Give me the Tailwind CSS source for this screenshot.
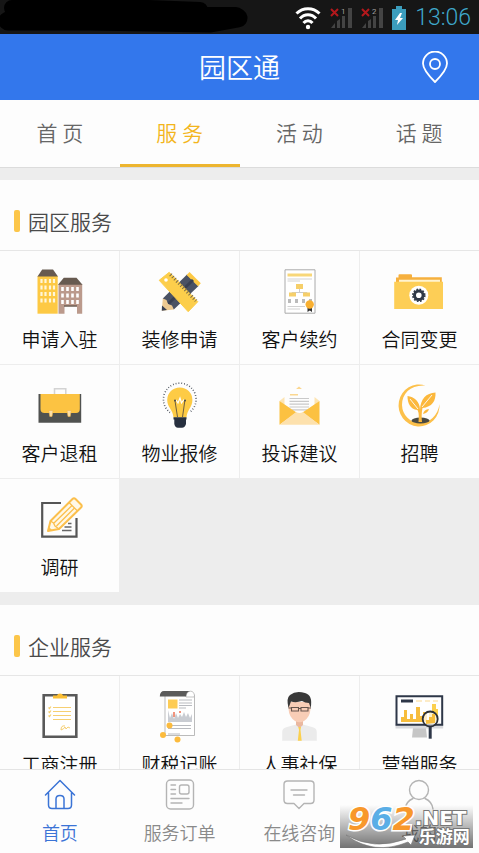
<!DOCTYPE html>
<html lang="zh-CN">

<head>
    <meta charset="UTF-8" />
    <meta name="viewport" content="width=device-width, initial-scale=1.0" />
    <title>园区通</title>
    <script src="https://cdn.jsdelivr.net/npm/@tailwindcss/browser@4"></script>
</head>

<body class="bg-[#ededed] font-['Noto_Sans_CJK_SC',sans-serif] font-[350]">
    <div class="relative flex h-screen flex-col overflow-hidden">

        <!-- Status bar -->
        <div class="flex h-[34px] shrink-0 items-center bg-[#161616] pr-2">
            <svg class="h-[34px] w-[250px]" viewBox="0 0 250 34" fill="none" stroke="#000" stroke-linecap="round">
                <path d="M12 8H148L200 10" stroke-width="16" />
                <path d="M8 21H90L210 23L238 18" stroke-width="19" />
                <path d="M100 16H236" stroke-width="18" />
            </svg>
            <div class="ml-auto flex items-center gap-[9px] pt-[2px]">
                <svg class="h-6 w-[26px]" viewBox="0 0 26 24" fill="none" stroke="#fff" stroke-width="3">
                    <path d="M1.500 7.500C8 1 18 1 24.500 7.500M5 12.500C9.500 7.500 16.500 7.500 21 12.500M8.500 17C11 14 15 14 17.500 17" />
                    <circle cx="13" cy="21" r="2.200" fill="#fff" stroke="none" />
                </svg>
                <svg class="h-6 w-[22px]" viewBox="0 0 22 24">
                    <path d="M1 22L5 17V22ZM7 15L10 13V22H7ZM12 10H15V22H12ZM18 2H22V22H18Z" fill="#444" />
                    <path d="M1 3L8 10M8 3L1 10" stroke="#b3181c" stroke-width="2" />
                    <text x="11" y="8" fill="#ddd" font-size="8" font-family="Roboto">1</text>
                </svg>
                <svg class="h-6 w-[22px]" viewBox="0 0 22 24">
                    <path d="M1 22L5 17V22ZM7 15L10 13V22H7ZM12 10H15V22H12ZM18 2H22V22H18Z" fill="#444" />
                    <path d="M1 3L8 10M8 3L1 10" stroke="#b3181c" stroke-width="2" />
                    <text x="11" y="8" fill="#ddd" font-size="8" font-family="Roboto">2</text>
                </svg>
                <svg class="h-6 w-[14px]" viewBox="0 0 14 24">
                    <path d="M4 0H10V3H14V24H0V3H4Z" fill="#3b9dbd" />
                    <path d="M8 7L3 14H6L5 19L11 12H8L10 7Z" fill="#fff" />
                </svg>
                <span class="font-['Roboto',sans-serif] text-[23px] leading-6 font-light text-[#3fa9cc]">13:06</span>
            </div>
        </div>

        <!-- Header -->
        <header class="relative flex h-[66px] shrink-0 items-center justify-center bg-[#3377ec] text-white">
            <h1 class="text-[27px] leading-9">园区通</h1>
            <button class="absolute right-7 top-[17px]" aria-label="位置">
                <svg class="h-8 w-8" viewBox="0 0 32 32" fill="none" stroke="#fff" stroke-width="1.800">
                    <path d="M16 31C13 28 4 19 4 12.500A12 12 0 0 1 28 12.500C28 19 19 28 16 31Z" stroke-linejoin="round" />
                    <circle cx="16" cy="13" r="5" />
                </svg>
            </button>
        </header>

        <!-- Tabs -->
        <nav class="grid h-[67px] shrink-0 grid-cols-4 bg-[#fdfdfd] text-center text-[21px] leading-16 text-[#666]">
            <a href="#">首 页</a>
            <a href="#" class="border-b-3 border-[#edb52f] text-[#f3b51c]">服 务</a>
            <a href="#">活 动</a>
            <a href="#">话 题</a>
        </nav>

        <main class="min-h-0 flex-1 overflow-y-auto [scrollbar-width:none]">
            <!-- Park services -->
            <section class="border-t border-[#dcdcdc] pt-3">
                <div class="flex h-[71px] items-center border-b border-[#e6e6e6] bg-[#fdfdfd] pt-3 pl-[14px]">
                    <span class="h-[22px] w-[6px] rounded-xs bg-[#fcc64a]"></span>
                    <h2 class="ml-2 text-[21px] leading-8 text-[#4a4a4a]">园区服务</h2>
                </div>
                <div class="grid grid-cols-4 gap-px text-[19px] leading-6 text-[#111]">
                    <a href="#" class="flex flex-col items-center gap-3 bg-[#fdfdfd] pt-4 pb-[13px]">
                        <svg class="size-12 overflow-visible" viewBox="0 0 48 48">
                            <path d="M1.500 9H21.700V46.700H1.500Z" fill="#fdc944" />
                            <path d="M1.500 9.500L6.200 2.500H17L22 9.500Z" fill="#675a50" />
                            <path d="M22.500 17H46.200V46.700H41V39H28.500V46.700H22.500Z" fill="#bb9a8c" />
                            <path d="M22 17.700L27.800 10.700H40.500L46.500 17.700Z" fill="#675a50" />
                            <path d="M5.500 12V36M9.500 12V36M14 12V36M18 12V36" stroke="#fff6d8" stroke-width="2.200" stroke-dasharray="4 2.500" />
                            <path d="M26.500 20V38M31.500 20V38M36.500 20V38M41.500 20V38" stroke="#fff" stroke-width="2.600" stroke-dasharray="4 2.500" />
                            <path d="M28 39H41" stroke="#6d5c52" stroke-width="1.500" />
                        </svg>
                        <span>申请入驻</span>
                    </a>
                    <a href="#" class="flex flex-col items-center gap-3 bg-[#fdfdfd] pt-4 pb-[13px]">
                        <svg class="size-12 overflow-visible" viewBox="0 0 48 48">
                            <path d="M31 7.500L42.500 19L17.800 42.500L6.800 31.500Z" fill="#4a5264" />
                            <path d="M33.500 5L44.800 16.300L42 19.300L30.600 8Z" fill="#fdc944" />
                            <path d="M37 13L12 37" stroke="#394052" stroke-width="3" />
                            <path d="M6.800 31.500L10.500 33L12 37L16 38.500L17.800 42.500L5.800 43.700Z" fill="#ecc992" />
                            <path d="M6 38.500L11 43L5.800 43.700Z" fill="#394052" />
                            <path d="M13.200 5.300L41.800 34.700L32.200 44.700L3.200 13.300Z" fill="#fcce4b" stroke="#fcce4b" stroke-linejoin="round" />
                            <path d="M14.500 7.500L40 33.700" stroke="#7c6d47" stroke-width="3.500" stroke-dasharray="1 2" />
                            <circle cx="10" cy="13" r="1.800" fill="#fff" />
                        </svg>
                        <span>装修申请</span>
                    </a>
                    <a href="#" class="flex flex-col items-center gap-3 bg-[#fdfdfd] pt-4 pb-[13px]">
                        <svg class="size-12 overflow-visible" viewBox="0 0 48 48">
                            <path d="M9 2.800H39V46.200H9Z" fill="#fff" stroke="#aaa" />
                            <path d="M11.500 8H36" stroke="#f8d778" stroke-width="3" />
                            <path d="M11.500 12H36M11.500 14H24M11.500 39.500H29M11.500 42H24" stroke="#d2d2d2" />
                            <path d="M23.500 22V25M16 28V25.500H31V28" fill="none" stroke="#ccc" />
                            <path d="M20 17H27V22H20ZM13 25.500H20V29.500H13ZM27 25.500H34V29.500H27Z" fill="#f6cf6a" />
                            <path d="M12 32H15V36H12ZM19 32H22V36H19ZM26 32H29V36H26ZM33 32H36V36H33Z" fill="#bbb" />
                            <path d="M31.500 40H36V45L33.800 43.500L31.500 45Z" fill="#333" />
                            <circle cx="33.700" cy="37.500" r="4.200" fill="#f9b031" />
                        </svg>
                        <span>客户续约</span>
                    </a>
                    <a href="#" class="flex flex-col items-center gap-3 bg-[#fdfdfd] pt-4 pb-[13px]">
                        <svg class="size-12 overflow-visible" viewBox="0 0 48 48">
                            <path d="M0 16V10.500H2.500V8Q2.500 7.300 3.500 7.300H15Q16 7.300 16 8.500V10.300H45.800V16Z" fill="#f6b03e" />
                            <path d="M3 12.800H44V16H3Z" fill="#fff3cf" />
                            <path d="M-1.800 14.700H47V42H-1.800Z" fill="#fdce56" />
                            <circle cx="22.800" cy="28.300" r="9.500" fill="#fff" />
                            <circle cx="22.800" cy="28.300" r="4.300" fill="none" stroke="#2f3947" stroke-width="3" />
                            <circle cx="22.800" cy="28.300" r="6" fill="none" stroke="#2f3947" stroke-width="1.600" stroke-dasharray="1.700 1.440" />
                        </svg>
                        <span>合同变更</span>
                    </a>
                    <a href="#" class="flex flex-col items-center gap-3 bg-[#fdfdfd] pt-4 pb-[13px]">
                        <svg class="size-12 overflow-visible" viewBox="0 0 48 48">
                            <path d="M18.500 13V7.800H29.800V13" fill="none" stroke="#d3d3d3" stroke-width="1.500" />
                            <path d="M2.500 13H45.200V41.700H2.500Z" fill="#505250" />
                            <path d="M4.500 13H43.800V28Q43.800 32 40 32H8.500Q4.500 32 4.500 28Z" fill="#fcc342" />
                            <path d="M12.800 29.500H17L16 35.500H13.800ZM31 29.500H35.200L34.200 35.500H32Z" fill="#fce0a8" stroke="#efb54e" stroke-width=".6" />
                        </svg>
                        <span>客户退租</span>
                    </a>
                    <a href="#" class="flex flex-col items-center gap-3 bg-[#fdfdfd] pt-4 pb-[13px]">
                        <svg class="size-12 overflow-visible" viewBox="0 0 48 48" fill="none">
                            <path d="M14 31.500A16.300 16.300 0 1 1 33.500 31.500" stroke="#444b55" stroke-width="1.600" stroke-dasharray=".8 2" />
                            <path d="M11.200 19A12.600 12.600 0 0 1 36.400 19C36.400 26 31 29 30.500 36.500H17.500C17 29 11.200 26 11.200 19Z" fill="#fdcb45" />
                            <path d="M19 20L21.500 36M28.800 20L26.500 36" stroke="#5b5140" stroke-width=".9" />
                            <path d="M20 19L22 22L24 17L25.500 22L28 18.500" stroke="#fff" stroke-width="1.200" />
                            <circle cx="19" cy="19.500" r="1" fill="#444" />
                            <circle cx="29" cy="19.500" r="1" fill="#444" />
                            <path d="M17.500 36.300H30.500V38.500H30V43Q29 46.700 26 46.700H22Q19 46.700 18.300 43V38.500H17.500Z" fill="#27303f" />
                        </svg>
                        <span>物业报修</span>
                    </a>
                    <a href="#" class="flex flex-col items-center gap-3 bg-[#fdfdfd] pt-4 pb-[13px]">
                        <svg class="size-12 overflow-visible" viewBox="0 0 48 48">
                            <path d="M3.500 20L8.500 16V24ZM43.500 20L38.500 16V24Z" fill="#fde5b4" />
                            <path d="M13.500 17.500H33M13.500 20.300H33M13.500 23.100H33M13.500 26H33M16 28.800H31" stroke="#c9c9c9" stroke-width="1.200" />
                            <path d="M3.500 20L20.500 31.500L3.500 43.700ZM43.500 20L26.500 31.500L43.500 43.700Z" fill="#fcc141" />
                            <path d="M3.500 43.700L20 31Q23.500 33 27 31L43.500 43.700Z" fill="#fde1ad" />
                            <path d="M20 8L23 5.500L26 8ZM14 13H22V14.500H14Z" fill="#fbd790" />
                        </svg>
                        <span>投诉建议</span>
                    </a>
                    <a href="#" class="flex flex-col items-center gap-3 bg-[#fdfdfd] pt-4 pb-[13px]">
                        <svg class="size-12 overflow-visible" viewBox="0 0 48 48">
                            <path d="M29.500 4.500A20.500 21 0 1 0 43.500 23C42 35 33 42 24 42A18 18.500 0 0 1 6 24C6 12 15 3.500 29.500 4.500Z" fill="#fcc04a" />
                            <ellipse cx="24.500" cy="39.500" rx="9" ry="3" fill="#4a4a42" />
                            <path d="M22.500 41C23 35 23 32 21.500 29C14 28 11.500 22 11.500 15C18 16 24 20 24 29C24.500 18 30 12 39.500 11.500C40 20 36 26 26.500 27C25.500 32 25.500 36 26 41Z" fill="#fcb83c" />
                            <path d="M14 18L22 28M26 26L36 14M27 33Q28 28.500 33 28Q32 32 27 33" fill="none" stroke="#fdfdfd" stroke-width=".9" />
                            <path d="M27 33Q28 28.500 33 28Q32 32 27 33" fill="#fcb83c" />
                        </svg>
                        <span>招聘</span>
                    </a>
                    <a href="#" class="flex flex-col items-center gap-3 bg-[#fdfdfd] pt-4 pb-[13px]">
                        <svg class="size-12 overflow-visible" viewBox="0 0 48 48" fill="none">
                            <path d="M25 8H6.200V41.700H40.500V23" stroke="#555" stroke-width="2.200" />
                            <path d="M32 28.500H35.500M28.500 32H35.500M26 35.500H35.500" stroke="#666" stroke-width="1.300" />
                            <path d="M12 36L14.500 26L36.500 4Q38 2.500 39.500 4L45 9.500Q46.500 11 45 12.500L23 34Z" fill="#fff8e6" stroke="#fbbf4c" stroke-width="2" stroke-linejoin="round" />
                            <path d="M14.500 26L17.500 28L19 31L23 34M33 7.500L41.500 16M18 28L36 10.500M20.500 31L38.500 13" stroke="#fbbf4c" stroke-width="1.300" />
                            <path d="M12 36L13 32L16 35Z" fill="#fbbf4c" />
                        </svg>
                        <span>调研</span>
                    </a>
                </div>
            </section>

            <!-- Company services -->
            <section class="pt-[13px]">
                <div class="flex h-[71px] items-center border-b border-[#e6e6e6] bg-[#fdfdfd] pt-3 pl-[14px]">
                    <span class="h-[22px] w-[6px] rounded-xs bg-[#fcc64a]"></span>
                    <h2 class="ml-2 text-[21px] leading-8 text-[#4a4a4a]">企业服务</h2>
                </div>
                <div class="grid grid-cols-4 gap-px text-[19px] leading-6 text-[#111]">
                    <a href="#" class="flex flex-col items-center gap-3 bg-[#fdfdfd] pt-4 pb-[13px]">
                        <svg class="size-12 overflow-visible" viewBox="0 0 48 48" fill="none">
                            <path d="M7.700 3.200H40.300V44.800H7.700Z" fill="#fff" stroke="#595959" stroke-width="2.600" />
                            <path d="M17 3.500H21Q21.500 1.500 24 1.500T27 3.500H31V6.500H17Z" fill="#fbbf35" />
                            <path d="M17 15.500H35M17 19.500H35M17 23.500H35M17 27.500H35M12.500 15.500L13.500 16.500L15 14.500M12.500 19.500L13.500 20.500L15 18.500M12.500 23.500L13.500 24.500L15 22.500" stroke="#f6cf72" stroke-width="1.200" />
                            <path d="M29 34Q25 33 25 38Q28 37 29 35L30 37L32 35L34 36" stroke="#f6cf72" />
                        </svg>
                        <span>工商注册</span>
                    </a>
                    <a href="#" class="flex flex-col items-center gap-3 bg-[#fdfdfd] pt-4 pb-[13px]">
                        <svg class="size-12 overflow-visible" viewBox="0 0 48 48">
                            <path d="M9 3H38.500V43.500H9Z" fill="#fff" stroke="#aaa" stroke-width=".8" />
                            <path d="M30 4Q31-.8 34.500-.8T38.600 4L38 5H30Z" fill="#fff" stroke="#aaa" stroke-width=".7" />
                            <path d="M3.800 4.500Q4-1 8-1H34Q30 0 30 4.500Z" fill="#5b5b5b" />
                            <path d="M12 7.500H21.500V16.500H12Z" fill="#fdcc55" />
                            <path d="M23 8H36M23 11H36M23 13.500H36M23 16H30M12 33.500H35M12 36.500H35M12 42H24" stroke="#b9bbc0" stroke-width="1.100" />
                            <path d="M12 18V30H36V22L34 26L32 21L30 25L28 20L26 25L24 22L22 26L20 21L18 27L16 21L14 26Z" fill="#c9ccd2" />
                            <path d="M18 20V25M24 19V21" stroke="#ed7254" stroke-width="1.500" />
                            <circle cx="13.500" cy="33.500" r="3" fill="#fcbb3d" />
                            <circle cx="7" cy="43" r="3" fill="#fcbb3d" />
                            <circle cx="21.500" cy="47.500" r="3" fill="#fcbb3d" />
                        </svg>
                        <span>财税记账</span>
                    </a>
                    <a href="#" class="flex flex-col items-center gap-3 bg-[#fdfdfd] pt-4 pb-[13px]">
                        <svg class="size-12 overflow-visible" viewBox="0 0 48 48">
                            <path d="M6.200 48.700V40Q6.200 36 11 35L20 32.500H27L36 35Q40.800 36 40.800 40V48.700Z" fill="#ebebeb" />
                            <path d="M20 26H27V33L23.500 36L20 33Z" fill="#eab8a0" />
                            <path d="M12.500 10H34.500V17Q34 25 28 29Q23.500 31.500 19 29Q13 25 12.500 17Z" fill="#f8cdb6" />
                            <path d="M12.500 16Q10 6 14 3Q20-2 29 1Q37 3 34.700 16L33 11Q29 11 26 9Q20 11 15 9.500Z" fill="#393939" />
                            <path d="M15.500 15.500H22.500V19H15.500ZM25 15.500H32V19H25ZM22.500 16.500H25M12.500 16H15.500M32 16H35" fill="none" stroke="#66554d" stroke-width="1.100" />
                            <path d="M22.300 35H25L24.500 38L25.700 48.700H21.800L23 38Z" fill="#fbd04e" />
                        </svg>
                        <span>人事社保</span>
                    </a>
                    <a href="#" class="flex flex-col items-center gap-3 bg-[#fdfdfd] pt-4 pb-[13px]">
                        <svg class="size-12 overflow-visible" viewBox="0 0 48 48">
                            <path d="M17 36H30L31 45.500H16Z" fill="#c6c6c6" />
                            <path d="M-.5 32H47.200V36.500H-.5Z" fill="#d9dadd" />
                            <path d="M.500 4.300H46.200V32.800H.500Z" fill="#fff" stroke="#2e3748" stroke-width="2" />
                            <path d="M5 7.500H17V10.500H5Z" fill="#2e3748" />
                            <path d="M20 9H26M29 9H34M37 9H42" stroke="#fbd98f" stroke-width="1.200" />
                            <path d="M5 30V25H8V18H11V27H14V22H17V27H20V15H24V24H27V20H31V30Z" fill="#f7bd3c" />
                            <path d="M33 20H36V12H40V17H42V30H33Z" fill="#fbd04e" />
                            <circle cx="34.200" cy="27" r="7.500" fill="#fff" fill-opacity=".7" stroke="#2b2f38" stroke-width="1.800" />
                            <path d="M30 32V28H33V25H36V22H39V31Z" fill="#f7bd3c" />
                            <path d="M34.200 35V46.700" stroke="#2e3748" stroke-width="3" />
                        </svg>
                        <span>营销服务</span>
                    </a>
                </div>
            </section>
        </main>

        <!-- Bottom navigation -->
        <nav class="grid shrink-0 grid-cols-4 border-t border-[#e4e4e4] bg-[#fdfdfd] pt-2 pb-[9px] text-lg leading-6 text-[#8a8a8a]">
            <a href="#" class="flex flex-col items-center gap-[10px] text-[#3b74d6]">
                <svg class="size-8" viewBox="0 0 32 32" fill="none" stroke="currentColor" stroke-width="1.500" stroke-linejoin="round" stroke-linecap="round">
                    <path d="M1.500 17L16 2.500L30.500 17M4.500 15V27Q4.500 30.500 8 30.500H24Q27.500 30.500 27.500 27V15" />
                    <path d="M12 30V21Q12 17.500 16 17.500T20 21V30" />
                </svg>
                <span>首页</span>
            </a>
            <a href="#" class="flex flex-col items-center gap-[10px]">
                <svg class="size-8" viewBox="0 0 32 32" fill="none" stroke="#b4b4b4" stroke-width="1.400" stroke-linecap="round">
                    <rect x="2.500" y="2" width="27" height="29" rx="4" />
                    <rect x="15.500" y="7" width="9.500" height="9" rx="2" />
                    <path d="M7 7H11.500M7 11.500H11.500M7 16H11.500M7 20.500H25M7 25H18" />
                </svg>
                <span>服务订单</span>
            </a>
            <a href="#" class="flex flex-col items-center gap-[10px]">
                <svg class="size-8" viewBox="0 0 32 32" fill="none" stroke="#b4b4b4" stroke-width="1.400" stroke-linecap="round" stroke-linejoin="round">
                    <path d="M4.500 3H27.500Q31 3 31 6.500V22Q31 25.500 27.500 25.500H21L16 30.500L11 25.500H4.500Q1 25.500 1 22V6.500Q1 3 4.500 3ZM8 12H24M10.500 17H21.500" />
                </svg>
                <span>在线咨询</span>
            </a>
            <a href="#" class="flex flex-col items-center gap-[10px]">
                <svg class="size-8" viewBox="0 0 32 32" fill="none" stroke="#b4b4b4" stroke-width="1.400" stroke-linecap="round">
                    <circle cx="16" cy="12" r="9.500" />
                    <path d="M2 31Q3 23.500 10 20.500M30 31Q29 23.500 22 20.500" />
                </svg>
                <span>我的</span>
            </a>
        </nav>

        <!-- Site badge over the corner -->
        <div class="absolute right-[6px] bottom-[5px] flex h-[43px] w-[133px] bg-linear-to-b from-black/0 to-black/55 pl-2">
            <svg class="absolute top-6 left-[6px] h-5 w-[70px]" viewBox="0 0 70 20">
                <path d="M0 6Q28 22 60 10L57 7L69 6L65 16L62 13Q28 27 0 6Z" fill="#fff" stroke="#777" stroke-width=".6" />
            </svg>
            <span class="relative font-['DejaVu_Sans',sans-serif] text-[32px] leading-7 font-bold italic [paint-order:stroke_fill] [-webkit-text-stroke:3px_#fff]"><span class="text-[#f8982c]">9</span><span class="text-[#5aaee6]">6</span><span class="text-[#f8982c]">2</span></span>
            <div class="relative flex flex-col font-bold text-white [paint-order:stroke_fill] [-webkit-text-stroke:2px_#777]">
                <span class="pt-1 font-['DejaVu_Sans',sans-serif] text-xl leading-[18px]">.NET</span>
                <span class="pl-1 text-[17px] leading-[18px]">乐游网</span>
            </div>
        </div>
    </div>
</body>

</html>
